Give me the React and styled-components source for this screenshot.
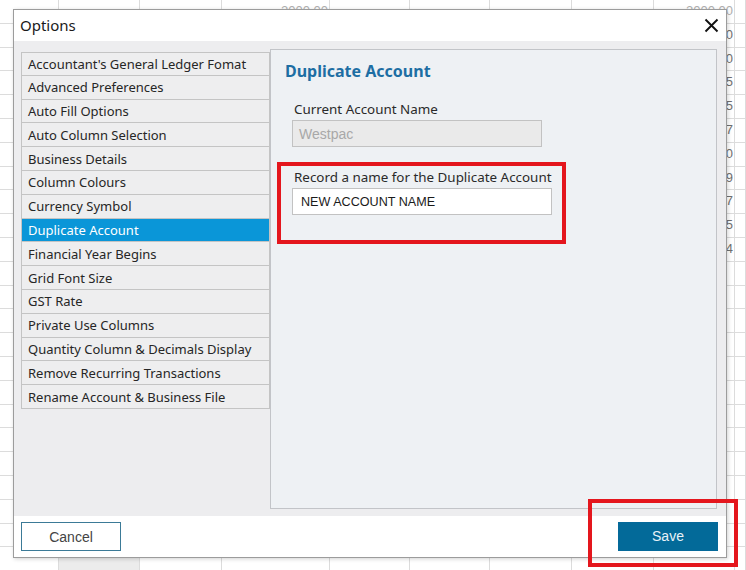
import React from "react"
import styled, { createGlobalStyle } from "styled-components"

const GlobalStyle = createGlobalStyle`
  body {
    margin: 0;
    font-family: "Noto Sans", "Open Sans", sans-serif;
  }
`

const Page = styled.div`
  position: relative;
  width: 746px;
  height: 570px;
  overflow: hidden;
  background: #fff;
`

const Sheet = styled.div`
  display: grid;
  grid-template-columns: 59px 81px 82px 108px 80px 80px 82px 82px 81px 11px;
  grid-auto-rows: 23.8px;
`

const Cell = styled.div`
  border-right: 1px solid #dcdcdc;
  border-bottom: 1px solid #dcdcdc;
  background: ${(p) => (p.$shaded ? "#ececec" : "#fff")};
  color: ${(p) => (p.$faded ? "#b0b0b0" : "#707070")};
  font-family: "Liberation Sans", Arial, sans-serif;
  font-size: 13px;
  text-align: right;
  padding-right: 1px;
  line-height: 22px;
  overflow: hidden;
  white-space: nowrap;
`

const Dialog = styled.div`
  position: absolute;
  left: 13px;
  top: 9px;
  width: 714px;
  height: 549px;
  box-sizing: border-box;
  display: flex;
  flex-direction: column;
  border: 1px solid #9c9c9c;
  box-shadow: 1px 1px 4px rgba(0, 0, 0, 0.18);
  background: #fff;
`

const TitleBar = styled.div`
  height: 30px;
  display: flex;
  align-items: center;
  justify-content: space-between;
  padding: 0 6px 1px 6px;
  background: #fff;
`

const Title = styled.span`
  font-size: 15px;
  color: #1a1a1a;
`

const CloseButton = styled.button`
  border: none;
  background: none;
  padding: 0;
  width: 18px;
  height: 18px;
  display: flex;
  align-items: center;
  justify-content: center;
  cursor: pointer;
`

const Body = styled.div`
  flex: 1;
  display: flex;
  background: #ededef;
  padding: 8px 9px 7px 7px;
`

const List = styled.div`
  width: 249px;
  margin-top: 3px;
  display: flex;
  flex-direction: column;
  align-self: flex-start;
`

const Item = styled.div`
  height: 23.8px;
  box-sizing: border-box;
  display: flex;
  align-items: center;
  padding-left: 6px;
  font-size: 13px;
  border: 1px solid #c4c4c4;
  border-top: ${(p) => (p.$first ? "1px solid #c4c4c4" : "none")};
  background: ${(p) => (p.$active ? "#0a96d8" : "#eeeeef")};
  color: ${(p) => (p.$active ? "#fff" : "#262626")};
  white-space: nowrap;
  overflow: hidden;
`

const Panel = styled.div`
  flex: 1;
  background: #eef1f4;
  border: 1px solid #c2c4c8;
  padding: 10px 14px;
  display: flex;
  flex-direction: column;
`

const Heading = styled.h2`
  margin: 0 0 18px 0;
  font-size: 16px;
  font-weight: 700;
  color: #1d6ea3;
`

const Field = styled.div`
  display: flex;
  flex-direction: column;
  margin-left: 7px;
  margin-bottom: ${(p) => p.$gap || 0}px;
`

const Label = styled.label`
  font-size: 13.4px;
  color: #2a2a2a;
  margin: 0 0 2px 2px;
`

const Input = styled.div`
  width: ${(p) => p.$width}px;
  height: 27px;
  box-sizing: border-box;
  border: 1px solid #c2c2c2;
  background: ${(p) => (p.$disabled ? "#eaeaea" : "#fff")};
  color: ${(p) => (p.$disabled ? "#a8a8a8" : "#1a1a1a")};
  font-family: "Liberation Sans", Arial, sans-serif;
  font-size: ${(p) => (p.$disabled ? 14 : 12.6)}px;
  display: flex;
  align-items: center;
  padding-left: ${(p) => (p.$disabled ? 6 : 8)}px;
`

const Footer = styled.div`
  height: 41px;
  display: flex;
  align-items: center;
  justify-content: space-between;
  padding: 0 8px 0 7px;
  background: #fff;
`

const Button = styled.button`
  width: 100px;
  height: 29px;
  box-sizing: border-box;
  font-family: "Liberation Sans", Arial, sans-serif;
  font-size: 14px;
  cursor: pointer;
  border: 1px solid ${(p) => (p.$primary ? "#05699a" : "#3b7a97")};
  background: ${(p) => (p.$primary ? "#036a99" : "#fff")};
  color: ${(p) => (p.$primary ? "#e8f2f8" : "#444")};
  margin-top: ${(p) => (p.$primary ? -1 : 0)}px;
`

const Highlight = styled.div`
  position: absolute;
  left: ${(p) => p.$x}px;
  top: ${(p) => p.$y}px;
  width: ${(p) => p.$w}px;
  height: ${(p) => p.$h}px;
  box-sizing: border-box;
  border: 4px solid #e4161d;
  pointer-events: none;
`

const options = [
  "Accountant's General Ledger Fomat",
  "Advanced Preferences",
  "Auto Fill Options",
  "Auto Column Selection",
  "Business Details",
  "Column Colours",
  "Currency Symbol",
  "Duplicate Account",
  "Financial Year Begins",
  "Grid Font Size",
  "GST Rate",
  "Private Use Columns",
  "Quantity Column & Decimals Display",
  "Remove Recurring Transactions",
  "Rename Account & Business File",
]

const rightValues = [
  "2000.00", "1500.00", "300.00", "45.25", "120.15", "87.07",
  "64.50", "12.29", "3.87", "410.45", "99.34",
]

function buildSheet() {
  const cells = []
  for (let r = 0; r < 24; r++) {
    for (let c = 0; c < 10; c++) {
      let text = ""
      if (r === 0 && c === 3) text = "2000.00"
      else if (c === 8 && rightValues[r]) text = rightValues[r]
      cells.push(
        <Cell key={r + "-" + c} $faded={r === 0} $shaded={r === 23 && c === 1}>
          {text}
        </Cell>
      )
    }
  }
  return cells
}

export default function App() {
  const active = "Duplicate Account"
  return (
    <Page>
      <GlobalStyle />
      <Sheet>{buildSheet()}</Sheet>

      <Dialog>
        <TitleBar>
          <Title>Options</Title>
          <CloseButton aria-label="Close">
            <svg width="15" height="15" viewBox="0 0 15 15">
              <path d="M1.5 1.5 13.5 13.5M13.5 1.5 1.5 13.5" stroke="#111" strokeWidth="1.9" />
            </svg>
          </CloseButton>
        </TitleBar>

        <Body>
          <List>
            {options.map((o, i) => (
              <Item key={o} $first={i === 0} $active={o === active}>
                {o}
              </Item>
            ))}
          </List>
          <Panel>
            <Heading>Duplicate Account</Heading>
            <Field $gap={21}>
              <Label>Current Account Name</Label>
              <Input $disabled $width={250}>Westpac</Input>
            </Field>
            <Field>
              <Label>Record a name for the Duplicate Account</Label>
              <Input $width={260}>NEW ACCOUNT NAME</Input>
            </Field>
          </Panel>
        </Body>

        <Footer>
          <Button>Cancel</Button>
          <Button $primary>Save</Button>
        </Footer>
      </Dialog>

      <Highlight $x={277} $y={162} $w={289} $h={82} />
      <Highlight $x={588} $y={499} $w={150} $h={68} />
    </Page>
  )
}
